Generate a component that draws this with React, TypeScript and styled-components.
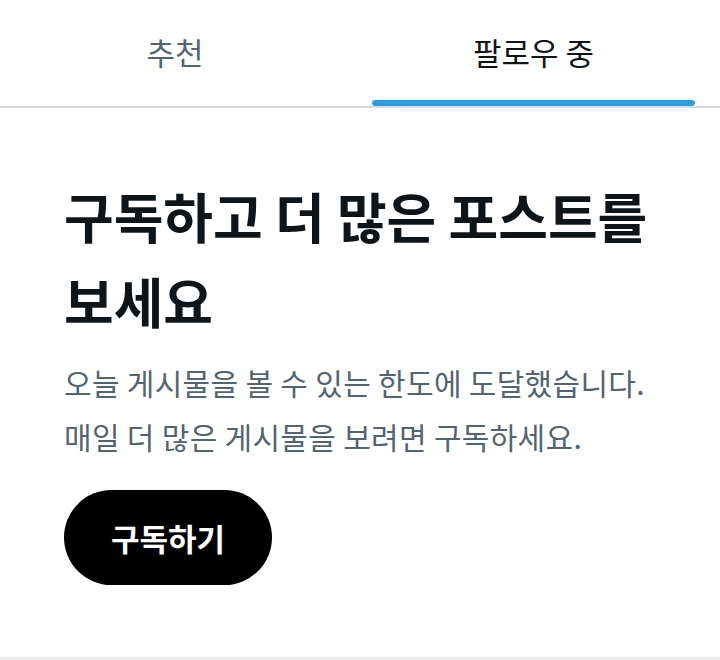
import styled, { createGlobalStyle } from "styled-components";

const GlobalStyle = createGlobalStyle`
  html, body {
    margin: 0;
    padding: 0;
    background: #ffffff;
  }
  body {
    font-family: "Noto Sans CJK KR", "Noto Sans", sans-serif;
  }
`;

const tabs = [
  { label: "추천", active: false },
  { label: "팔로우 중", active: true },
];

const App = () => {
  return (
    <Page>
      <GlobalStyle />
      <TabBar>
        {tabs.map((tab) => (
          <Tab key={tab.label} $active={tab.active}>
            <TabLabel $active={tab.active}>{tab.label}</TabLabel>
            {tab.active && <Indicator />}
          </Tab>
        ))}
      </TabBar>
      <Content>
        <Heading>
          구독하고 더 많은 포스트를
          <br />
          보세요
        </Heading>
        <Body>
          오늘 게시물을 볼 수 있는 한도에 도달했습니다.
          <br />
          매일 더 많은 게시물을 보려면 구독하세요.
        </Body>
        <SubscribeButton type="button">구독하기</SubscribeButton>
      </Content>
    </Page>
  );
};

const Page = styled.div`
  width: 720px;
  height: 660px;
  display: flex;
  flex-direction: column;
  box-sizing: border-box;
  border-bottom: 3px solid #ebebeb;
`;

const TabBar = styled.div`
  display: flex;
  height: 108px;
  box-sizing: border-box;
  border-bottom: 2px solid #d4dadd;
`;

const Tab = styled.div<{ $active: boolean }>`
  position: relative;
  display: flex;
  align-items: center;
  justify-content: center;
  flex: ${(p) => (p.$active ? "0 0 323px" : "0 0 350px")};
  margin-left: ${(p) => (p.$active ? "22px" : "0")};
  padding-bottom: 4px;
`;

const TabLabel = styled.span<{ $active: boolean }>`
  font-size: 31px;
  font-weight: 400;
  color: ${(p) => (p.$active ? "#0f1419" : "#536471")};
`;

const Indicator = styled.div`
  position: absolute;
  left: 0;
  right: 0;
  bottom: 0;
  height: 6px;
  border-radius: 3px;
  background: #2d9be0;
`;

const Content = styled.div`
  display: flex;
  flex-direction: column;
  align-items: flex-start;
  padding: 65px 0 0 64px;
`;

const Heading = styled.h1`
  margin: 0;
  font-size: 54px;
  font-weight: 700;
  line-height: 85px;
  color: #0f1419;
  white-space: nowrap;
`;

const Body = styled.p`
  margin: 12px 0 0 0;
  font-size: 30px;
  line-height: 54px;
  letter-spacing: 0.3px;
  color: #536471;
  white-space: nowrap;
`;

const SubscribeButton = styled.button`
  margin-top: 27px;
  width: 208px;
  height: 95px;
  border: none;
  border-radius: 48px;
  background: #000000;
  color: #ffffff;
  font-family: "Noto Sans CJK KR", "Noto Sans", sans-serif;
  font-size: 31px;
  font-weight: 700;
  cursor: pointer;
`;

export default App;
